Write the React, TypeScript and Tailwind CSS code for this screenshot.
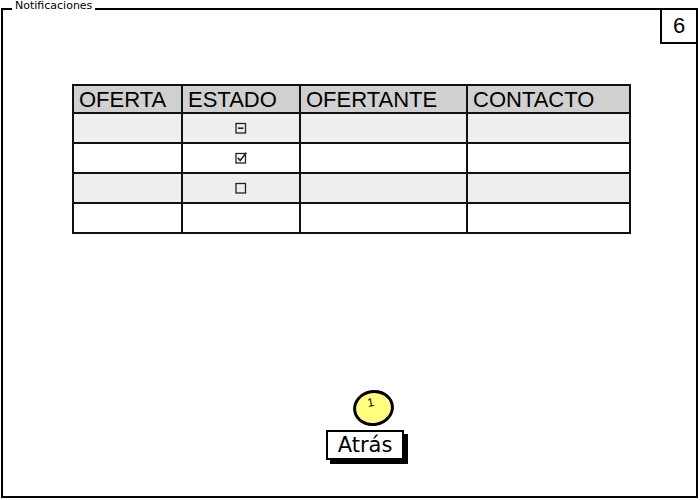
import React from "react"

const cols = ["w-[107px]", "w-[118px]", "w-[167px]", "w-[163px]"]
const headers = ["OFERTA", "ESTADO", "OFERTANTE", "CONTACTO"]

const StateIcon = ({ kind }: { kind: string }) => {
  if (kind === "none") return null
  return (
    <svg width="12" height="12" viewBox="0 0 12 12" fill="none" stroke="#222" strokeWidth="1.3">
      <rect x="1" y="1.5" width="9.5" height="9.5" />
      {kind === "partial" && <line x1="3" y1="6.2" x2="8.5" y2="6.2" strokeWidth="1.6" />}
      {kind === "checked" && <path d="M2.8 5.8 L5.2 8.6 L11.2 0.8" strokeWidth="1.6" />}
    </svg>
  )
}

const rows = [
  { state: "partial", bg: "bg-[#eeeeee]", h: "h-[30px]" },
  { state: "checked", bg: "bg-white", h: "h-[30px]" },
  { state: "empty", bg: "bg-[#eeeeee]", h: "h-[30px]" },
  { state: "none", bg: "bg-white", h: "h-[28px]" },
]

export default function App() {
  return (
    <div className="w-[700px] h-[500px] bg-white relative overflow-hidden font-['Liberation_Sans',sans-serif]">
      <div className="ml-[1px] mt-[8px] w-[697px] h-[490px] border-2 border-black flex flex-col items-start">
        {/* tabla de notificaciones */}
        <div className="ml-[69px] mt-[74px] border-2 border-[#111] flex flex-col">
          <div className="flex h-[28px] bg-[#d0d0d0] border-b-2 border-[#111]">
            {headers.map((h, i) => (
              <div
                key={h}
                className={`${cols[i]} ${i > 0 ? "border-l-2 border-[#111]" : ""} pl-[5px] text-[22px] leading-[28px] text-black`}
              >
                {h}
              </div>
            ))}
          </div>
          {rows.map((r, ri) => (
            <div
              key={ri}
              className={`flex ${r.h} ${r.bg} ${ri < rows.length - 1 ? "border-b-2 border-[#111]" : ""}`}
            >
              {cols.map((c, i) => (
                <div
                  key={i}
                  className={`${c} ${i > 0 ? "border-l-2 border-[#111]" : ""} flex items-center justify-center`}
                >
                  {i === 1 && <StateIcon kind={r.state} />}
                </div>
              ))}
            </div>
          ))}
        </div>

        <div className="mt-[196px] ml-[323px] relative">
          <div className="absolute left-[27px] top-[-40px] w-[41px] h-[36px] rounded-[50%] bg-[#ffff80] border-[3px] border-black rotate-[-10deg] flex justify-center">
            <span className="text-[12px] leading-[12px] mt-[3px] mr-[4px] text-black">1</span>
          </div>
          <div className="w-[78px] h-[30px] border-2 border-black bg-white shadow-[4px_4px_0_#000] flex items-center justify-center">
            <span className="text-[21px] leading-[26px] text-black font-['DejaVu_Sans',sans-serif]">Atrás</span>
          </div>
        </div>
      </div>

      <div className="absolute left-[12px] top-0 bg-white px-[3px] text-[11px] leading-[12px] text-black font-['DejaVu_Sans',sans-serif]">
        Notificaciones
      </div>

      <div className="absolute left-[660px] top-[8px] w-[38px] h-[36px] bg-white border-2 border-black flex items-center justify-center">
        <span className="text-[22px] leading-[22px] text-black">6</span>
      </div>
    </div>
  )
}
